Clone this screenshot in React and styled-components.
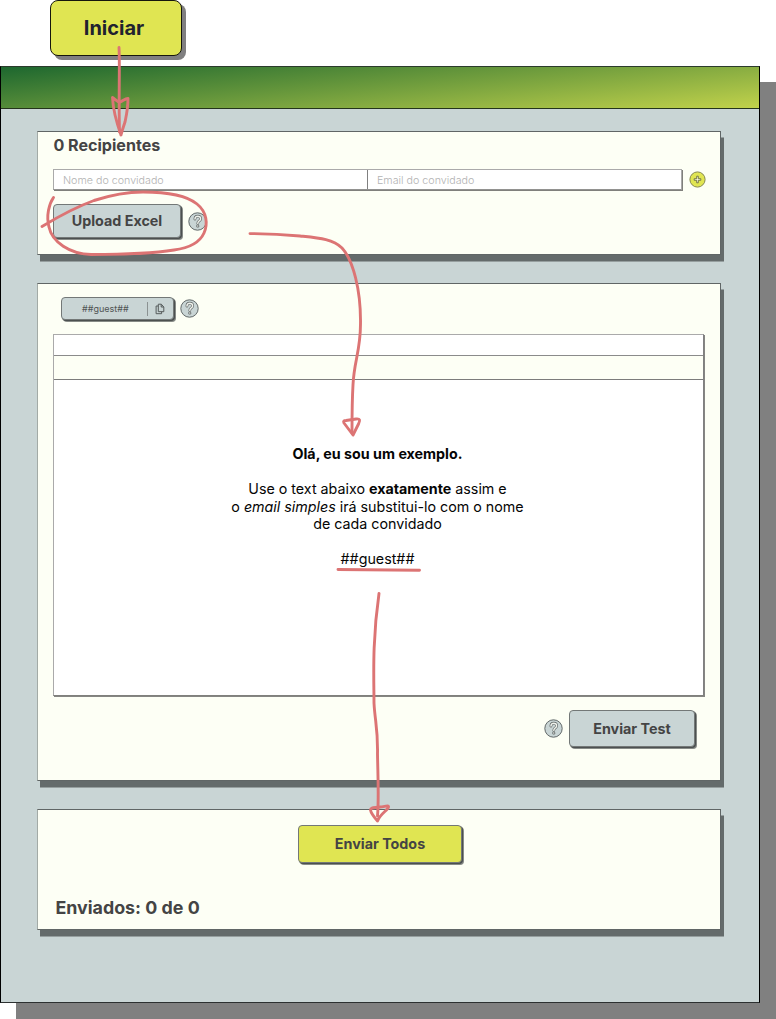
import React from "react";
import styled, { createGlobalStyle } from "styled-components";

const GlobalStyle = createGlobalStyle`
  *, *::before, *::after { box-sizing: border-box; }
  html, body { margin: 0; padding: 0; background: #fff; }
  body { font-family: Inter, "Liberation Sans", sans-serif; overflow: hidden; }
`;

const Page = styled.div`
  position: relative;
  width: 776px;
  height: 1019px;
  overflow: hidden;
`;

const StartButton = styled.button`
  display: flex;
  align-items: center;
  justify-content: center;
  width: 132px;
  height: 56px;
  margin: 0 0 9.5px 50px;
  padding: 0 4px 0 0;
  border: 1px solid #16160c;
  border-radius: 8px;
  background: #e0e552;
  box-shadow: 4px 4px 0 #807f80;
  color: #20222f;
  font: 700 20px/24px Inter, sans-serif;
`;

const Window = styled.main`
  width: 760px;
  height: 937px;
  border: 1px solid #000;
  border-top-color: #2b3a2c;
  border-bottom-color: #2c3030;
  background: #c9d5d5;
  box-shadow: 16px 16px 0 #808080;
`;

const Header = styled.header`
  height: 42.5px;
  border-bottom: 1px solid #24341c;
  background: linear-gradient(174deg, #1d672f, #c1d24b);
`;

const Sections = styled.div`
  display: flex;
  flex-direction: column;
  gap: 28px;
  padding: 22px 0 0 36px;
`;

const Card = styled.section`
  display: flex;
  flex-direction: column;
  width: 684px;
  height: ${(p) => p.$height}px;
  padding: ${(p) => p.$padding};
  border: 1px solid #606666;
  border-left-color: #a2aaa6;
  background: #fdfff5;
  box-shadow: 3px 6.5px 0 #646b6b;
`;

const Title = styled.h2`
  margin: 0;
  padding-left: 0.4px;
  color: #444;
  font-size: ${(p) => p.$size}px;
  line-height: 20px;
  font-weight: 700;
`;

const Row = styled.div`
  display: flex;
  align-items: center;
  gap: ${(p) => p.$gap}px;
  margin: ${(p) => p.$margin};
  justify-content: ${(p) => p.$justify || "flex-start"};
`;

const Fields = styled.div`
  display: flex;
  width: 629px;
  height: 21px;
  border: 1px solid #aaa;
  border-bottom-color: #929290;
  background: #fff;
  box-shadow: 1px 1px 0 #80807c;
`;

const Field = styled.input`
  flex: 1;
  min-width: 0;
  height: 19px;
  padding: 1px 9px 0;
  border: 0;
  background: transparent;
  font: 300 10.7px/18px Inter, sans-serif;
  &::placeholder { color: #b2b2b2; opacity: 1; }
  & + & { border-left: 1px solid #808080; }
`;

const AddButton = styled.button`
  display: flex;
  width: 17px;
  height: 17px;
  padding: 0;
  border: 0;
  background: none;
`;

const Button = styled.button`
  display: flex;
  align-items: center;
  justify-content: center;
  width: ${(p) => p.$width}px;
  height: ${(p) => p.$height}px;
  padding: 0;
  border: 1px solid #737877;
  border-radius: 4px;
  background: ${(p) => (p.$primary ? "#e0e552" : "#c9d5d5")};
  box-shadow: 1px 1px 0 #4c5050, 2px 2px 0 #878b87;
  color: #444;
  font: 700 ${(p) => p.$size || 14.3}px/18px Inter, sans-serif;
`;

const TagButton = styled(Button)`
  justify-content: flex-start;
  padding: 0 0 0 20px;
  color: #505454;
  font-size: 9px;
  font-weight: 400;
`;

const TagDivider = styled.span`
  width: 1px;
  height: 14px;
  margin: 0 7px 0 18px;
  background: #8b9292;
`;

const HelpButton = styled.button`
  display: flex;
  width: 19px;
  height: 19px;
  padding: 0;
  border: 0;
  background: none;
`;

const Editor = styled.div`
  width: 651px;
  height: 362px;
  border: 1px solid #aaa;
  border-right-color: #808080;
  border-bottom-color: #80807c;
  background: #fff;
  box-shadow: 1px 1px 0 #858582;
`;

const MenuBar = styled.div`
  height: 21px;
  border-bottom: 1px solid #8b8b8b;
`;

const ToolBar = styled.div`
  height: 24px;
  border-bottom: 1px solid #7c7c7c;
  background: #fdfff5;
`;

const Message = styled.div`
  padding: 65px 2px 0 0;
  color: #050505;
  text-align: center;
  font-size: 14.27px;
  line-height: 17.5px;
  p { margin: 0 0 17.5px; }
  strong { font-weight: 700; }
`;

const Annotations = styled.svg`
  position: absolute;
  inset: 0;
  pointer-events: none;
  fill: none;
  stroke: #dc7474;
  stroke-width: 2.9;
  stroke-linecap: round;
  stroke-linejoin: round;
`;

function Help() {
  return (
    <HelpButton aria-label="Ajuda">
      <svg width="19" height="19" viewBox="0 0 19 19" fill="none">
        <circle cx="9.5" cy="9.5" r="8.7" fill="#c9d5d5" stroke="#626969" />
        <path d="M6.9 7.1c.1-2 1.1-2.9 2.8-2.9 1.8 0 2.9 1 2.9 2.5 0 1.2-.7 1.9-1.6 2.5-.9.6-1.2 1-1.2 2.2" stroke="#5c6262" strokeWidth="2.7" strokeLinecap="round" />
        <circle cx="9.8" cy="14" r="1.55" fill="#5c6262" />
        <path d="M6.9 7.1c.1-2 1.1-2.9 2.8-2.9 1.8 0 2.9 1 2.9 2.5 0 1.2-.7 1.9-1.6 2.5-.9.6-1.2 1-1.2 2.2" stroke="#eef1eb" strokeWidth="1.45" strokeLinecap="round" />
        <circle cx="9.8" cy="14" r=".8" fill="#eef1eb" />
      </svg>
    </HelpButton>
  );
}

function AddIcon() {
  return (
    <svg width="17" height="17" viewBox="0 0 17 17">
      <circle cx="8.5" cy="8.5" r="7.6" fill="#e0e552" stroke="#85874e" />
      <path d="M7.7 5.2h1.6v2.5h2.5v1.6H9.3v2.5H7.7V9.3H5.2V7.7h2.5z" fill="#f8f9dc" stroke="#6c6e40" strokeWidth=".9" />
    </svg>
  );
}

function CopyIcon() {
  return (
    <svg width="10" height="12" viewBox="0 0 10 12" fill="none" stroke="#555b5b">
      <path d="M3.3 1.2h3L8.8 4v4.7H3.3zM6.2 1.3V4h2.5" />
      <path d="M3.2 3H1.1v7.7h5.5V8.8" />
    </svg>
  );
}

export default function App() {
  return (
    <>
      <GlobalStyle />
      <Page>
        <StartButton>Iniciar</StartButton>
        <Window>
          <Header />
          <Sections>
            <Card $height={124} $padding="3px 0 0 15px">
              <Title $size={16.1}>0 Recipientes</Title>
              <Row $gap={7} $margin="14px 0 14px">
                <Fields>
                  <Field placeholder="Nome do convidado" />
                  <Field placeholder="Email do convidado" />
                </Fields>
                <AddButton aria-label="Adicionar"><AddIcon /></AddButton>
              </Row>
              <Row $gap={6.5} $margin="0">
                <Button $width={128} $height={34} $size={14.3}>Upload Excel</Button>
                <Help />
              </Row>
            </Card>
            <Card $height={498} $padding="13px 0 0 15px">
              <Row $gap={6} $margin="0 0 14px 8px">
                <TagButton $width={113} $height={23}>
                  ##guest##
                  <TagDivider />
                  <CopyIcon />
                </TagButton>
                <Help />
              </Row>
              <Editor>
                <MenuBar />
                <ToolBar />
                <Message>
                  <p><strong>Olá, eu sou um exemplo.</strong></p>
                  <p>
                    Use o text abaixo <strong>exatamente</strong> assim e<br />
                    o <em>email simples</em> irá substitui-lo com o nome<br />
                    de cada convidado
                  </p>
                  <p>##guest##</p>
                </Message>
              </Editor>
              <Row $gap={6} $margin="14px 25px 0 0" $justify="flex-end">
                <Help />
                <Button $width={126} $height={37}>Enviar Test</Button>
              </Row>
            </Card>
            <Card $height={121} $padding="15px 0 0 17px">
              <Row $gap={0} $margin="0 0 34.5px 243px">
                <Button $primary $width={164} $height={38}>Enviar Todos</Button>
              </Row>
              <Title $size={17.85}>Enviados: 0 de 0</Title>
            </Card>
          </Sections>
        </Window>
        <Annotations width="776" height="1019" viewBox="0 0 776 1019">
          <path d="M119 47.5C120 66 118.5 98 119.5 132" />
          <path d="M121 135C116 121 113 108 112.5 97.5C115 99 117 102 120 102C123 101 125 98.5 128 98.5C128 109 126 117 125 122C123 128 122 131 121 135" />
          <path d="M42 226.5C61 215 76 207 94 200.5C111 195 125 192 143 192C166 192 186 195 197 204C207 212 208 224 204 233C200 242 189 248 174 250C150 254 120 254.5 91 254.5C70 254 52 242 49 227C46 216 49 204 53.5 197.5" />
          <path d="M250 233.6C268 233.5 285 234.5 300 236C319 238 333 239 342 248C353 260 361 290 360.5 324C360.5 351 354 361 353 385C352 402 352 418 352 432" />
          <path d="M353 435L344 423C343 421 344 420.5 346 420.5L356 419C360 418.5 360.5 420 358.5 424Z" />
          <path d="M338 569.5L419.5 570.3" />
          <path d="M379 593.5C372 642 374 679 374 703C375 722 378 728 377.5 754C378 780 379 799 377.5 816" />
          <path d="M377.5 821C374 817 371 813 370.5 810C370.5 807 375 808 380 807C384 807 389 804.5 388.5 807C388 810 380 814 377.5 821Z" />
        </Annotations>
      </Page>
    </>
  );
}
